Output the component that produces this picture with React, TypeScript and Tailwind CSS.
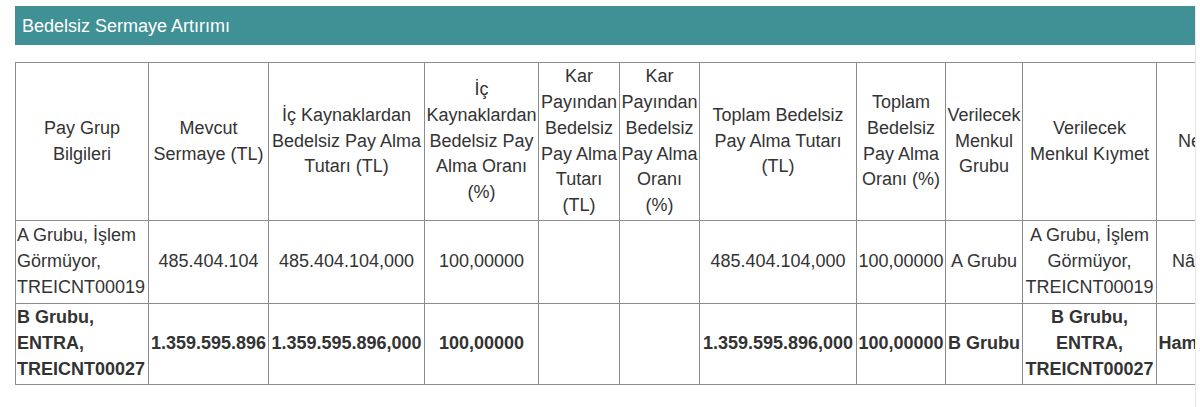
import React from "react";

const cols = [133, 120, 156, 114, 81, 80, 157, 89, 77, 134, 79, 120];

const headers: React.ReactNode[] = [
  "Pay Grup Bilgileri",
  "Mevcut Sermaye (TL)",
  "İç Kaynaklardan Bedelsiz Pay Alma Tutarı (TL)",
  "İç Kaynaklardan Bedelsiz Pay Alma Oranı (%)",
  "Kar Payından Bedelsiz Pay Alma Tutarı (TL)",
  <>
    Kar Payından Bedelsiz Pay Alma Oranı
    <br />
    (%)
  </>,
  "Toplam Bedelsiz Pay Alma Tutarı (TL)",
  "Toplam Bedelsiz Pay Alma Oranı (%)",
  "Verilecek Menkul Grubu",
  "Verilecek Menkul Kıymet",
  "Nevi",
  "Borsada İşlem Görüp Görmeyeceği",
];

const rows = [
  {
    bold: false,
    cells: [
      "A Grubu, İşlem Görmüyor, TREICNT00019",
      "485.404.104",
      "485.404.104,000",
      "100,00000",
      "",
      "",
      "485.404.104,000",
      "100,00000",
      "A Grubu",
      "A Grubu, İşlem Görmüyor, TREICNT00019",
      "Nâma",
      "Hayır",
    ],
  },
  {
    bold: true,
    cells: [
      "B Grubu, ENTRA, TREICNT00027",
      "1.359.595.896",
      "1.359.595.896,000",
      "100,00000",
      "",
      "",
      "1.359.595.896,000",
      "100,00000",
      "B Grubu",
      "B Grubu, ENTRA, TREICNT00027",
      "Hamiline",
      "Evet",
    ],
  },
];

export default function App() {
  const total = cols.reduce((a, b) => a + b, 0);
  return (
    <div
      className="bg-white w-[1200px] h-[407px] overflow-hidden text-[#333333]"
      style={{ fontFamily: '"Liberation Sans", Arial, sans-serif' }}
    >
      <div className="pl-[15px] pt-[6px]">
        <div className="w-[1181px] overflow-hidden border-r border-[#e6e6e6]">
          <div className="w-[1180px] h-[39px] bg-[#3f9196] flex items-center pl-[7px] text-white text-[18px] leading-none">
            Bedelsiz Sermaye Artırımı
          </div>
          <div className="pt-[17px] pb-[30px]">
            <table
              className="table-fixed border-collapse text-[18px] leading-[25.7px]"
              style={{ width: total }}
            >
              <colgroup>
                {cols.map((w, i) => (
                  <col key={i} style={{ width: w }} />
                ))}
              </colgroup>
              <thead>
                <tr className="h-[158px]">
                  {headers.map((h, i) => (
                    <th
                      key={i}
                      className="border border-[#8c8c8c] font-normal text-center align-middle px-0 py-0"
                    >
                      {h}
                    </th>
                  ))}
                </tr>
              </thead>
              <tbody>
                {rows.map((r, ri) => (
                  <tr key={ri} className={ri === 0 ? "h-[83px]" : "h-[81px]"}>
                    {r.cells.map((c, ci) => (
                      <td
                        key={ci}
                        className={
                          "border border-[#8c8c8c] align-middle px-[1px] py-0 " +
                          (ci === 0 ? "text-left " : "text-center ") +
                          (r.bold ? "font-bold" : "font-normal")
                        }
                      >
                        {c}
                      </td>
                    ))}
                  </tr>
                ))}
              </tbody>
            </table>
          </div>
        </div>
      </div>
    </div>
  );
}
